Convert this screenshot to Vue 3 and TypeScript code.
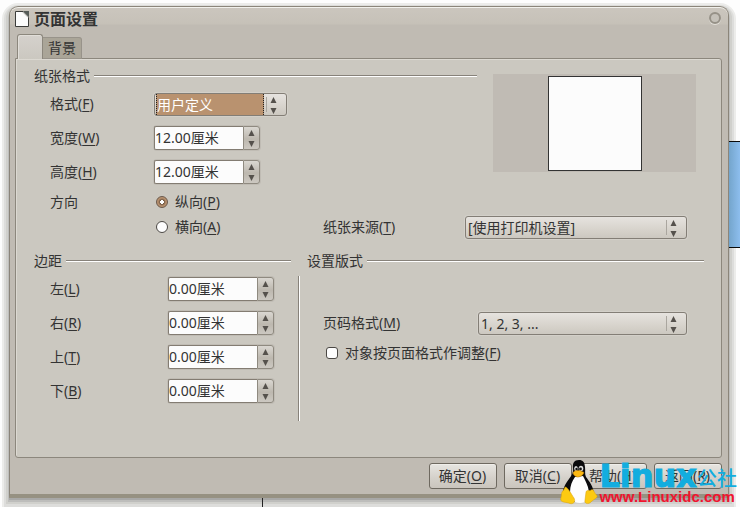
<script setup lang="ts">
import { ref } from 'vue'

interface Measure {
  id: string
  label: string
  key: string
  value: string
}

const sizes = ref<Measure[]>([
  { id: 'width', label: '宽度', key: 'W', value: '12.00' },
  { id: 'height', label: '高度', key: 'H', value: '12.00' },
])

const margins = ref<Measure[]>([
  { id: 'left', label: '左', key: 'L', value: '0.00' },
  { id: 'right', label: '右', key: 'R', value: '0.00' },
  { id: 'top', label: '上', key: 'T', value: '0.00' },
  { id: 'bottom', label: '下', key: 'B', value: '0.00' },
])

const actions = [
  { label: '确定', key: 'O' },
  { label: '取消', key: 'C' },
  { label: '帮助', key: 'H' },
  { label: '返回', key: 'R' },
]

const format = ref('用户定义')
const source = ref('[使用打印机设置]')
const numbering = ref('1, 2, 3, ...')
const orientation = ref('portrait')
const fitObjects = ref(false)

function step(item: Measure, delta: number) {
  item.value = Math.max(0, parseFloat(item.value) + delta).toFixed(2)
}

function edit(item: Measure, event: Event) {
  const parsed = parseFloat((event.target as HTMLInputElement).value)
  if (!Number.isNaN(parsed)) item.value = parsed.toFixed(2)
}
</script>

<template>
  <div class="desktop">
    <div class="sheet-edge"></div>
    <div class="ruler-mark"></div>

    <main class="dialog">
      <header class="titlebar">
        <svg class="doc-icon" width="14" height="16" viewBox="0 0 14 16" aria-hidden="true">
          <path d="M.5.5H8L13.500 6V15.500H.5Z" fill="#fcfcfc" stroke="#3c3c3a" />
          <path d="M8 0H14V6Z" fill="#565c58" />
          <path d="M7.500 1L13 6.500" stroke="#d5d5d0" />
        </svg>
        <h1>页面设置</h1>
        <button class="close" type="button" aria-label="关闭"></button>
      </header>

      <nav class="tabs">
        <button class="tab active" type="button" aria-label="页面"></button>
        <button class="tab" type="button">背景</button>
      </nav>

      <section class="panel">
        <div class="paper">
          <div class="paper-fields">
            <h2 class="heading">纸张格式</h2>
            <div class="row">
              <label for="format">格式(<u>F</u>)</label>
              <div class="combo focused">
                <select id="format" v-model="format">
                  <option>用户定义</option>
                </select>
                <svg class="arrows" width="7" height="17" viewBox="0 0 7 17" aria-hidden="true">
                  <path d="M3.500 0L6.500 6H.5ZM3.500 17L.5 11H6.500Z" />
                </svg>
              </div>
            </div>
            <div v-for="item in sizes" :key="item.id" class="row">
              <label :for="item.id">{{ item.label }}(<u>{{ item.key }}</u>)</label>
              <div class="spinner">
                <input :id="item.id" type="text" :value="item.value + '厘米'" @change="edit(item, $event)" />
                <div class="steps">
                  <button type="button" aria-label="增加" @click="step(item, 0.1)">
                    <svg width="7" height="6" viewBox="0 0 7 6"><path d="M3.500 0L6.500 6H.5Z" /></svg>
                  </button>
                  <button type="button" aria-label="减少" @click="step(item, -0.1)">
                    <svg width="7" height="6" viewBox="0 0 7 6"><path d="M3.500 6L.5 0H6.500Z" /></svg>
                  </button>
                </div>
              </div>
            </div>
          </div>
          <div class="preview"><div class="preview-page"></div></div>
        </div>

        <div class="orientation">
          <span>方向</span>
          <label class="choice">
            <input v-model="orientation" type="radio" name="orientation" value="portrait" />
            <span>纵向(<u>P</u>)</span>
          </label>
          <label class="choice landscape">
            <input v-model="orientation" type="radio" name="orientation" value="landscape" />
            <span>横向(<u>A</u>)</span>
          </label>
          <label class="source-label" for="source">纸张来源(<u>T</u>)</label>
          <div class="combo source">
            <select id="source" v-model="source">
              <option>[使用打印机设置]</option>
            </select>
            <svg class="arrows" width="7" height="17" viewBox="0 0 7 17" aria-hidden="true">
              <path d="M3.500 0L6.500 6H.5ZM3.500 17L.5 11H6.500Z" />
            </svg>
          </div>
        </div>

        <div class="lower">
          <div class="margins">
            <h2 class="heading">边距</h2>
            <div v-for="item in margins" :key="item.id" class="row">
              <label :for="item.id">{{ item.label }}(<u>{{ item.key }}</u>)</label>
              <div class="spinner">
                <input :id="item.id" type="text" :value="item.value + '厘米'" @change="edit(item, $event)" />
                <div class="steps">
                  <button type="button" aria-label="增加" @click="step(item, 0.1)">
                    <svg width="7" height="6" viewBox="0 0 7 6"><path d="M3.500 0L6.500 6H.5Z" /></svg>
                  </button>
                  <button type="button" aria-label="减少" @click="step(item, -0.1)">
                    <svg width="7" height="6" viewBox="0 0 7 6"><path d="M3.500 6L.5 0H6.500Z" /></svg>
                  </button>
                </div>
              </div>
            </div>
          </div>
          <div class="divider"></div>
          <div class="layout">
            <h2 class="heading">设置版式</h2>
            <div class="layout-body">
              <div class="row">
                <label for="numbering">页码格式(<u>M</u>)</label>
                <div class="combo">
                  <select id="numbering" v-model="numbering">
                    <option>1, 2, 3, ...</option>
                  </select>
                  <svg class="arrows" width="7" height="17" viewBox="0 0 7 17" aria-hidden="true">
                    <path d="M3.500 0L6.500 6H.5ZM3.500 17L.5 11H6.500Z" />
                  </svg>
                </div>
              </div>
              <label class="choice fit">
                <input v-model="fitObjects" type="checkbox" />
                <span>对象按页面格式作调整(<u>F</u>)</span>
              </label>
            </div>
          </div>
        </div>
      </section>

      <footer class="actions">
        <button v-for="a in actions" :key="a.label" type="button" class="action">{{ a.label }}(<u>{{ a.key }}</u>)</button>
      </footer>
    </main>

    <div class="watermark">
      <svg class="penguin" width="38" height="46" viewBox="0 0 38 46" aria-hidden="true">
        <path d="M19 1C14 1 12.500 4 13 9C13.500 14 12 16 9 20C5 25 2 31 3 37L10 43H27L34 36C34 28 29 22 26 18C24.500 15 25.500 12 25 8C24.500 3 23 1 19 1Z" fill="#0a0a0c" />
        <path d="M15 18C12 22 10 27 10 33C10 39 13 44 20 44C27 44 29 39 29 33C28 26 25 21 23 17Z" fill="#fdfdfd" />
        <ellipse cx="16" cy="9.500" rx="1.800" ry="2.600" fill="#ddd" />
        <ellipse cx="21" cy="9.500" rx="2.300" ry="2.800" fill="#ddd" />
        <circle cx="16.500" cy="10" r="1.200" fill="#111" />
        <circle cx="20.500" cy="10" r="1.400" fill="#111" />
        <path d="M13 13.500C14.500 11 20 10.500 24 13.500C23.500 16 19.500 18.500 17 18C14.500 17 13 15.500 13 13.500Z" fill="#fcb913" stroke="#b87905" stroke-width=".5" />
        <path d="M5 28C8 28 11 35 14 39C16 43 13 45.500 10 44.500C6 43 2 43.500 1 41.500C0 39.500 2 37 1.500 34.500C2 32 4 31.500 5 28Z" fill="#fcca12" stroke="#d79f0c" stroke-width=".5" />
        <path d="M26 33C27 30 29 33 32 30.500C34 30.500 34 34 37 36.500C38 39 34 40 31 43C28 46 24 44.500 25 41Z" fill="#fcca12" stroke="#d79f0c" stroke-width=".5" />
      </svg>
      <div class="wordmark">
        <div class="brand"><b>Linux</b><span>公社</span></div>
        <div class="site">www.Linuxidc.com</div>
      </div>
    </div>
  </div>
</template>

<style>
body {
  margin: 0;
  background: #fdfdfd;
}
</style>

<style scoped>
* {
  box-sizing: border-box;
}

.desktop {
  position: relative;
  display: flex;
  min-height: 100vh;
  padding: 6px 11px 9px 9px;
  overflow: hidden;
  font: 14px/20px "Noto Sans", "Noto Sans CJK SC", sans-serif;
  color: #333;
}

.sheet-edge {
  position: absolute;
  top: 141px;
  right: 0;
  z-index: 1;
  width: 11px;
  height: 107px;
  border: solid #0a0a0a;
  border-width: 1px 0;
  background: linear-gradient(90deg, #74a5cc, #8dbeee);
}

.ruler-mark {
  position: absolute;
  left: 262px;
  bottom: 0;
  z-index: 1;
  width: 1px;
  height: 9px;
  background: #222;
}

.dialog {
  display: flex;
  flex: 1;
  flex-direction: column;
  min-width: 0;
  padding: 0 6px 5px 5px;
  border: 1px solid #8b857a;
  border-bottom: 4px solid #969182;
  border-radius: 9px 9px 0 0;
  background: linear-gradient(#cbc6be 0, #c6c1b8 17px, #c0bbb3 18px);
  box-shadow:
    inset 0 1px #f2f1ec,
    0 2px 0 #a8a8a7,
    0 3px 0 1px #bdbdbb,
    0 3px 0 3px #d0d0cc,
    0 4px 0 5px #dddddb,
    0 4px 0 7px #ececea;
}

.titlebar {
  display: flex;
  align-items: center;
  height: 27px;
  padding-right: 1px;
}

.doc-icon {
  margin: 0 5px 4px 0;
}

h1 {
  flex: 1;
  margin: 0 0 3px;
  font-size: 16px;
  line-height: 20px;
}

.close {
  width: 12px;
  height: 12px;
  margin-bottom: 5px;
  padding: 0;
  border: 2px solid #969187;
  border-radius: 50%;
  background: #c5c1b9;
  box-shadow: 0 1px #e2dfd8;
}

.tabs {
  position: relative;
  z-index: 1;
  display: flex;
  align-items: flex-end;
  margin: 0 0 -1px 2px;
}

.tab {
  height: 22px;
  padding: 0 5px;
  border: 1px solid #98938a;
  border-left: 0;
  border-radius: 0 3px 0 0;
  background: #aaa598;
  color: #333;
  font: inherit;
}

.tab.active {
  width: 26px;
  height: 25px;
  border: 1px solid #8c877d;
  border-bottom: 0;
  border-radius: 3px 3px 0 0;
  background: linear-gradient(#d5d1cc, #cbc8c0);
  box-shadow: inset 1px 1px #e1ded9;
}

.panel {
  flex: 1;
  padding: 7px 17px 0 18px;
  border: 1px solid #8c877d;
  border-radius: 0 3px 3px 3px;
  background: #cbc8c0;
  box-shadow: inset 1px 1px #dcd9d2;
}

.heading {
  display: flex;
  align-items: center;
  gap: 4px;
  margin: 0 0 1px;
  font-size: 14px;
  font-weight: 400;
  line-height: 20px;
}

.heading::after {
  flex: 1;
  height: 2px;
  background: linear-gradient(#87827a 50%, #fff 50%);
  content: "";
}

.paper {
  display: flex;
  gap: 16px;
  padding-right: 8px;
}

.paper-fields {
  flex: 1;
}

.row {
  display: grid;
  grid-template-columns: 104px auto;
  align-items: center;
  justify-content: start;
  height: 34px;
  padding-left: 16px;
}

u {
  text-underline-offset: 2px;
}

.combo {
  display: flex;
  position: relative;
  height: 23px;
  border: 1px solid #837e76;
  border-radius: 3px;
  background: linear-gradient(#e6e3df, #d7d3cc 60%, #ccc8c0);
  box-shadow: 0 0 0 1px #d3d0c9;
}

.combo select {
  flex: 1;
  min-width: 0;
  padding: 0 20px 0 2px;
  border: 0;
  outline: 0;
  appearance: none;
  background: none;
  color: #333;
  font: inherit;
  line-height: 21px;
}

.arrows {
  position: absolute;
  top: 3px;
  right: 9px;
  fill: #55514c;
}

.combo::after {
  position: absolute;
  top: 3px;
  right: 19px;
  width: 1px;
  height: 15px;
  background: #aaa69f;
  content: "";
}

.combo.focused {
  width: 133px;
}

.combo.focused select {
  margin: 0 22px 0 1px;
  padding: 0;
  border: dotted #222;
  border-width: 0 1px;
  background: #b9926f;
  color: #fff;
}

.spinner {
  display: flex;
  width: 106px;
  height: 24px;
  border-radius: 3px;
  box-shadow: 0 0 0 1px #c0bcb4;
}

.spinner input {
  flex: 1;
  min-width: 0;
  padding: 0;
  border: 1px solid #837c72;
  border-right: 0;
  border-radius: 2px 0 0 2px;
  background: #fcfcfc;
  color: #333;
  font: inherit;
}

.steps {
  display: flex;
  flex-direction: column;
  width: 17px;
  border: 1px solid #8f8a80;
  border-radius: 0 3px 3px 0;
  background: linear-gradient(#dad7d1, #bdb8af 55%, #ccc8c1);
}

.steps button {
  display: flex;
  flex: 1;
  align-items: center;
  justify-content: center;
  padding: 0;
  border: 0;
  background: none;
}

.steps svg {
  fill: #55514c;
}

.preview {
  display: flex;
  align-items: center;
  justify-content: center;
  width: 203px;
  height: 98px;
  margin-top: 8px;
  background: #c0bbb4;
}

.preview-page {
  width: 94px;
  height: 95px;
  border: 1px solid #333;
  background: #fcfcfc;
}

.orientation {
  display: grid;
  grid-template-columns: 104px 169px 142px 1fr;
  grid-template-rows: 26px 24px;
  align-items: center;
  padding: 0 17px 0 16px;
}

.orientation .landscape {
  grid-row: 2;
  grid-column: 2;
}

.orientation .source-label {
  grid-row: 2;
  grid-column: 3;
}

.orientation .source {
  grid-row: 2;
  grid-column: 4;
}

.choice {
  display: flex;
  align-items: center;
  gap: 7px;
}

.choice input {
  flex: none;
  width: 12px;
  height: 12px;
  margin: 0;
  border: 1px solid #4b4844;
  appearance: none;
  background: #fdfdfd;
}

.choice input[type="radio"] {
  margin-left: 2px;
  border-radius: 50%;
}

.choice input[type="radio"]:checked {
  border-color: #6b594b;
  background: radial-gradient(circle, #fff 0 2px, #6e5540 2px, #b9926f 4px);
}

.choice input[type="checkbox"] {
  border-radius: 3px;
}

.choice input[type="checkbox"]:checked {
  background: #b9926f;
}

.lower {
  display: grid;
  grid-template-columns: 257px 16px 1fr;
  margin-top: 12px;
}

.margins .row {
  grid-template-columns: 118px auto;
}

.divider {
  width: 2px;
  height: 145px;
  margin: 25px 0 0 7px;
  background: linear-gradient(90deg, #87827a 50%, #fff 50%);
}

.layout-body {
  padding: 34px 17px 0 0;
}

.layout .row {
  grid-template-columns: 155px 1fr;
  justify-content: stretch;
}

.fit {
  height: 26px;
  padding-left: 19px;
}

.actions {
  display: flex;
  justify-content: flex-end;
  gap: 7px;
  padding-top: 5px;
}

.action {
  width: 68px;
  height: 26px;
  padding: 0 1px 0 0;
  border: 1px solid #6e6960;
  border-radius: 3px;
  background: linear-gradient(#e7e5e1, #d4d0c9 60%, #cac5bd);
  box-shadow: inset 0 1px #f0eeea;
  color: #333;
  font: inherit;
}

.watermark {
  position: absolute;
  right: 3px;
  bottom: 2px;
  z-index: 2;
  display: flex;
  align-items: flex-end;
  gap: 1px;
  pointer-events: none;
}

.brand {
  display: flex;
  align-items: center;
  height: 26px;
  color: #12addf;
}

.brand b {
  font: bold 32px/26px "DejaVu Sans", sans-serif;
  -webkit-text-stroke: 1px #12addf;
}

.brand span {
  padding-top: 5px;
  font-size: 20px;
  font-weight: 500;
}

.site {
  color: #f0142f;
  font: bold 15px/16px "Liberation Sans", sans-serif;
}
</style>
